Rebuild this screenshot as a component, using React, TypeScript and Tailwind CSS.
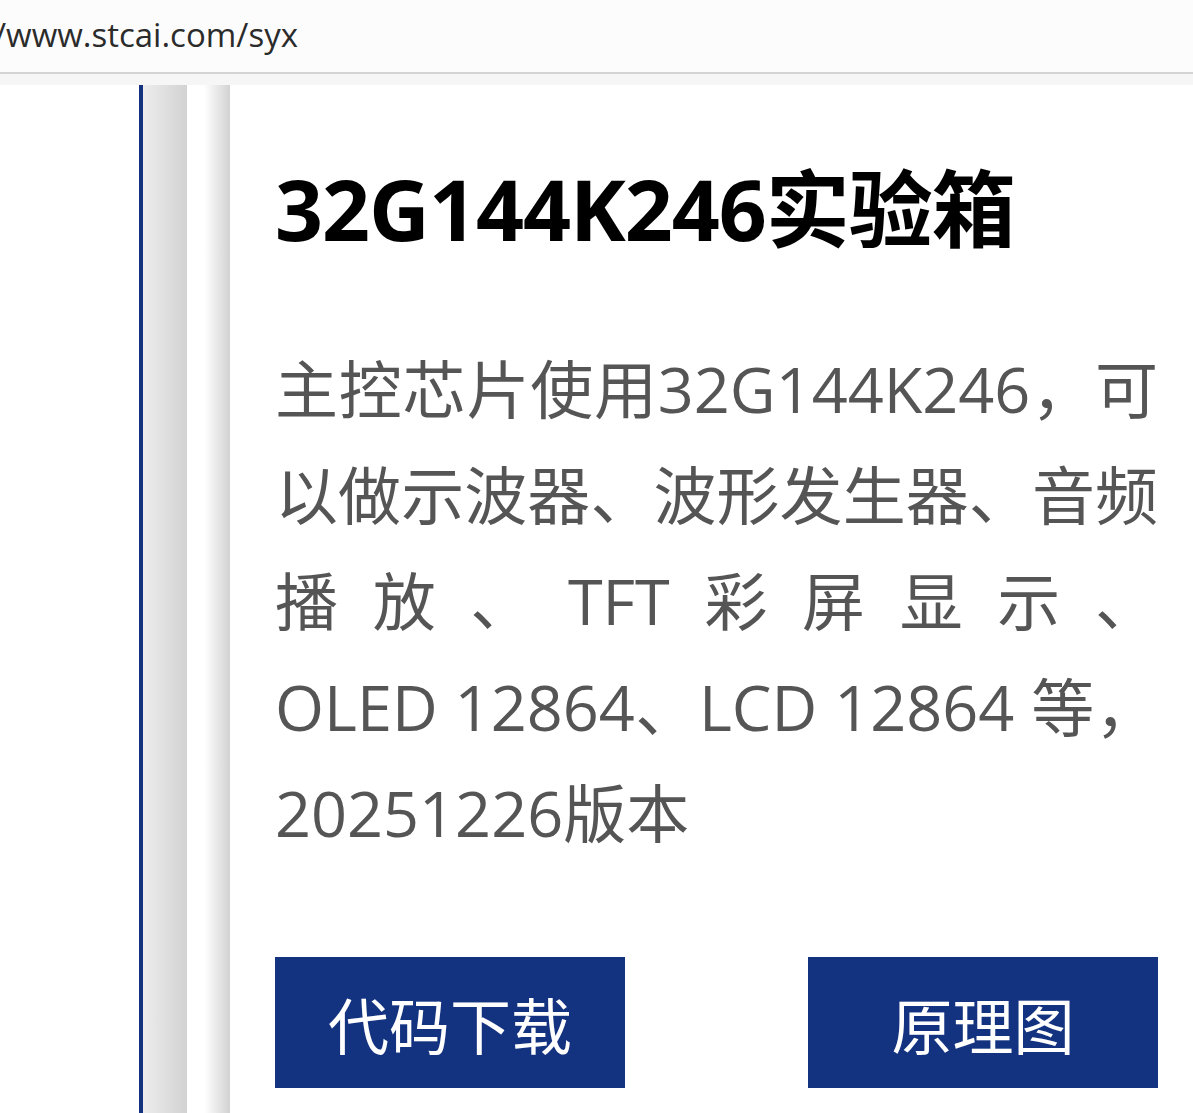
const font = "font-['Open_Sans','Noto_Sans_CJK_SC',sans-serif]";

export default function App() {
  return (
    <div className={`h-[1113px] w-full overflow-hidden bg-white ${font}`}>
      <header className="flex h-[74px] items-center overflow-hidden border-b-2 border-[#d4d4d4] bg-[#fcfcfc]">
        <span className="-ml-[6px] pb-[2px] text-[33px] whitespace-nowrap text-[#2b2b2b]">/www.stcai.com/syx</span>
      </header>
      <div className="h-[11px] bg-[#f6f6f6]" />

      <div className="flex h-[1028px]">
        <div className="w-[139px] shrink-0 bg-white" />
        <div className="w-[4px] shrink-0 bg-[#14327f]" />
        <div className="w-[44px] shrink-0 bg-gradient-to-r from-[#ededed] to-[#d2d2d2]" />
        <div className="w-[43px] shrink-0 bg-gradient-to-r from-white from-40% to-[#d2d2d2]" />

        <main className="flex-1 pl-[45px] pr-[35px]">
          <h1 className="mt-[64px] text-[84px] font-bold leading-[120px] tracking-[-1px] text-black">
            32G144K246实验箱
          </h1>
          <p className="mt-[67px] text-justify text-[63px] leading-[106px] text-[#555555]">
            主控芯片使用32G144K246，可以做示波器、波形发生器、音频播放、TFT彩屏显示、
            <span className="whitespace-nowrap">OLED 12864、LCD 12864 等，</span>
            20251226版本
          </p>
          <div className="mt-[91px] flex justify-between">
            <button className="flex h-[131px] w-[350px] items-center justify-center bg-[#13327f] pt-[8px] text-[61px] text-white">
              代码下载
            </button>
            <button className="flex h-[131px] w-[350px] items-center justify-center bg-[#13327f] pt-[8px] text-[61px] text-white">
              原理图
            </button>
          </div>
        </main>
      </div>
    </div>
  );
}
